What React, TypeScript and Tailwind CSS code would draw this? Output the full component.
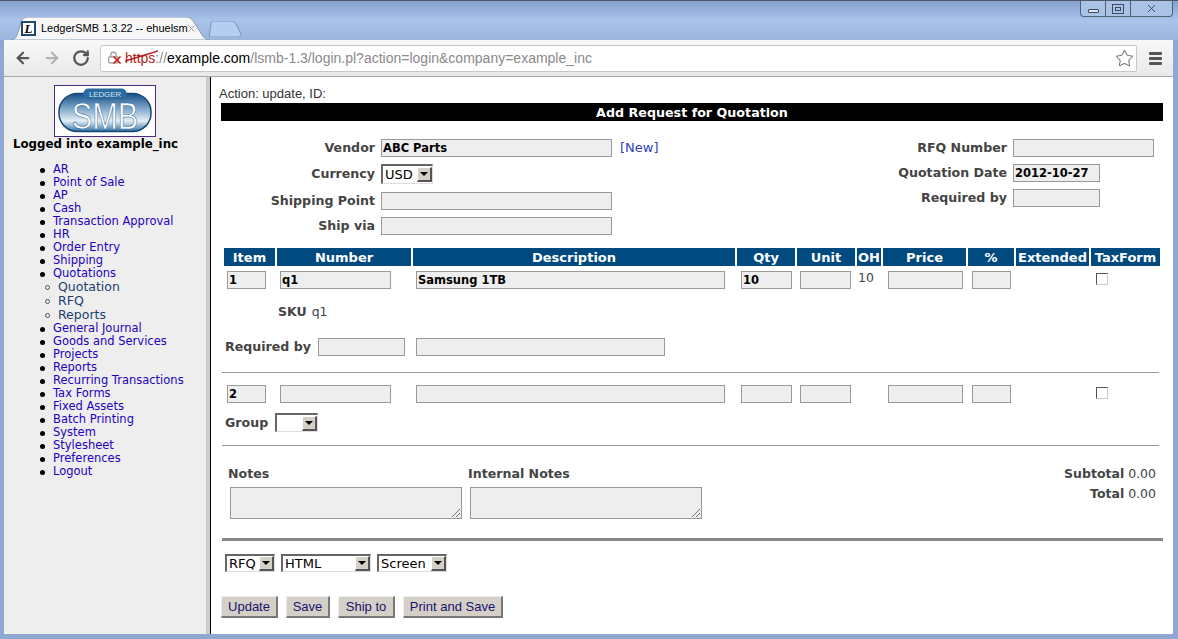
import React from 'react';
import { ArrowLeft, ArrowRight, RotateCw, Lock, Star, X } from 'lucide-react';

const menuTop = ['AR', 'Point of Sale', 'AP', 'Cash', 'Transaction Approval', 'HR', 'Order Entry', 'Shipping', 'Quotations'];
const menuSub = ['Quotation', 'RFQ', 'Reports'];
const menuBottom = [
  'General Journal',
  'Goods and Services',
  'Projects',
  'Reports',
  'Recurring Transactions',
  'Tax Forms',
  'Fixed Assets',
  'Batch Printing',
  'System',
  'Stylesheet',
  'Preferences',
  'Logout',
];

const headers = ['Item', 'Number', 'Description', 'Qty', 'Unit', 'OH', 'Price', '%', 'Extended', 'TaxForm'];

function Field({ value, className }: { value?: string; className: string }) {
  return (
    <div className={`h-[18px] shrink-0 border border-[#999999] bg-[#eeeeee] pl-[1px] text-[11.5px] leading-[17px] font-bold text-black ${className}`}>
      {value}
    </div>
  );
}

function TextArea() {
  return (
    <div className="relative mt-[5px] ml-[2px] h-[32px] w-[232px] border border-[#999999] bg-[#eeeeee]">
      <svg viewBox="0 0 10 10" className="absolute right-0 bottom-0 h-[10px] w-[10px]">
        <path d="M9 1 L1 9 M9 5 L5 9" stroke="#777777" strokeWidth="1" />
      </svg>
    </div>
  );
}

function Select({ value, className }: { value?: string; className: string }) {
  return (
    <div className={`flex shrink-0 items-center justify-between border-t-2 border-l-2 border-r border-b border-t-[#666666] border-l-[#666666] border-r-[#dddddd] border-b-[#dddddd] bg-white text-[13px] leading-none text-black ${className}`}>
      <span className="pl-[2px]">{value}</span>
      <span className="flex h-[15px] w-[15px] items-center justify-center border-t border-l border-r-2 border-b-2 border-t-white border-l-white border-r-[#555555] border-b-[#555555] bg-[#d4d0c8]">
        <span className="h-0 w-0 border-x-[4px] border-t-[4px] border-x-transparent border-t-black" />
      </span>
    </div>
  );
}

function Btn({ label, className }: { label: string; className: string }) {
  return (
    <div className={`flex h-[22px] items-center justify-center border-t border-l border-r-2 border-b-2 border-t-[#eeeeee] border-l-[#eeeeee] border-r-[#777777] border-b-[#777777] bg-[#d4d0c8] font-['Liberation_Sans'] text-[13px] text-[#20106e] ${className}`}>
      {label}
    </div>
  );
}

function Logo() {
  return (
    <div className="mx-auto h-[52px] w-[102px] border border-[#4b2a80] bg-white p-[2px]">
      <svg viewBox="0 0 98 46" className="h-full w-full">
        <defs>
          <linearGradient id="pill" x1="0" y1="0" x2="0" y2="1">
            <stop offset="0" stopColor="#144f88" />
            <stop offset="0.45" stopColor="#8fb2d0" />
            <stop offset="0.72" stopColor="#e6eef4" />
            <stop offset="1" stopColor="#2f70a6" />
          </linearGradient>
        </defs>
        <rect x="2" y="5" width="94" height="39" rx="19" fill="url(#pill)" stroke="#14456f" strokeWidth="1.5" />
        <rect x="27" y="0" width="44" height="11" rx="5" fill="#2a6a9f" />
        <text x="49" y="9" textAnchor="middle" fontFamily="Liberation Sans" fontSize="8" fill="#d6e4ef">LEDGER</text>
        <text x="49" y="41" textAnchor="middle" fontFamily="Liberation Sans" fontSize="38" fill="#ffffff" stroke="#2f6a9c" strokeWidth="0.6" textLength="68" lengthAdjust="spacingAndGlyphs">SMB</text>
      </svg>
    </div>
  );
}

function Sidebar() {
  return (
    <aside className="w-[202px] shrink-0 bg-[#eeeeee] pt-[8px] font-['DejaVu_Sans']">
      <Logo />
      <div className="-mt-[1px] pl-[9px] text-[11.8px] leading-[16px] font-bold text-black">Logged into example_inc</div>
      <ul className="mt-[11px] pl-[49px]">
        {menuTop.map((m) => (
          <li key={m} className="relative h-[13px] text-[11.5px] leading-[13px] text-[#2200c1]">
            <span className="absolute top-[5px] -left-[13px] h-[5px] w-[5px] rounded-full bg-black" />
            {m}
          </li>
        ))}
        {menuSub.map((m) => (
          <li key={m} className="relative h-[14px] pl-[5px] text-[12.5px] leading-[14px] text-[#1c3f6e]">
            <span className="absolute top-[5px] -left-[8px] h-[5px] w-[5px] rounded-full border border-[#555555]" />
            {m}
          </li>
        ))}
        {menuBottom.map((m) => (
          <li key={m} className="relative h-[13px] text-[11.5px] leading-[13px] text-[#2200c1]">
            <span className="absolute top-[5px] -left-[13px] h-[5px] w-[5px] rounded-full bg-black" />
            {m}
          </li>
        ))}
      </ul>
    </aside>
  );
}

function Label({ children, className }: { children: React.ReactNode; className: string }) {
  return <div className={`text-[12.6px] font-bold text-[#444444] ${className}`}>{children}</div>;
}

function TopForm() {
  return (
    <div className="mt-[18px] flex justify-between pr-[19px]">
      <div className="flex flex-col">
        <div className="flex h-[18px] items-center">
          <Label className="w-[154px] text-right">Vendor</Label>
          <Field value="ABC Parts" className="ml-[6px] w-[231px]" />
          <span className="ml-[8px] text-[13px] text-[#2a3fc0]">[New]</span>
        </div>
        <div className="mt-[7px] flex h-[20px] items-center">
          <Label className="w-[154px] pt-[1px] text-right">Currency</Label>
          <Select value="USD" className="ml-[6px] h-[20px] w-[52px]" />
        </div>
        <div className="mt-[8px] flex h-[18px] items-center">
          <Label className="w-[154px] text-right">Shipping Point</Label>
          <Field className="ml-[6px] w-[231px]" />
        </div>
        <div className="mt-[7px] flex h-[18px] items-center">
          <Label className="w-[154px] text-right">Ship via</Label>
          <Field className="ml-[6px] w-[231px]" />
        </div>
      </div>
      <div className="flex flex-col">
        <div className="flex h-[18px] items-center">
          <Label className="w-[140px] text-right">RFQ Number</Label>
          <Field className="ml-[6px] w-[141px]" />
        </div>
        <div className="mt-[7px] flex h-[18px] items-center">
          <Label className="w-[140px] text-right">Quotation Date</Label>
          <Field value="2012-10-27" className="ml-[6px] w-[87px]" />
          <div className="w-[54px]" />
        </div>
        <div className="mt-[7px] flex h-[18px] items-center">
          <Label className="w-[140px] text-right">Required by</Label>
          <Field className="ml-[6px] w-[87px]" />
          <div className="w-[54px]" />
        </div>
      </div>
    </div>
  );
}

function ItemRow({ item, number, description, qty, oh }: { item: string; number?: string; description?: string; qty?: string; oh?: string }) {
  return (
    <div className="flex h-[18px] items-start">
      <Field value={item} className="ml-[3px] w-[39px]" />
      <Field value={number} className="ml-[14px] w-[111px]" />
      <Field value={description} className="ml-[25px] w-[309px]" />
      <Field value={qty} className="ml-[16px] w-[51px]" />
      <Field value="" className="ml-[8px] w-[51px]" />
      <span className="ml-[7px] w-[30px] text-[12.5px] leading-[14px] text-[#444444]">{oh}</span>
      <Field className="w-[75px]" />
      <Field className="ml-[9px] w-[39px]" />
      <span className="mt-[2px] ml-[85px] h-[12px] w-[12px] border border-t-[#555555] border-l-[#555555] border-r-[#cccccc] border-b-[#cccccc] bg-white" />
    </div>
  );
}

function Main() {
  return (
    <main className="min-w-0 flex-1 bg-white pl-[10px] font-['DejaVu_Sans']">
      <div className="-ml-[2px] h-[26px] pt-[9px] font-['Liberation_Sans'] text-[13px] leading-[16px] text-[#333333]">Action: update, ID:</div>
      <div className="h-[18px] w-[942px] bg-black pt-[1px] text-center text-[12.7px] leading-[18px] font-bold text-white">Add Request for Quotation</div>

      <TopForm />

      <div className="mt-[13px] ml-[3px] grid w-[936px] grid-cols-[51px_134px_322px_58px_58px_24px_83px_46px_73px_69px] gap-x-[2px]">
        {headers.map((h) => (
          <div key={h} className="h-[18px] bg-[#004a80] pt-[1px] text-center text-[13px] leading-[18px] font-bold whitespace-nowrap text-white">
            {h}
          </div>
        ))}
      </div>

      <div className="mt-[5px] ml-[3px]">
        <ItemRow item="1" number="q1" description="Samsung 1TB" qty="10" oh="10" />
        <div className="mt-[15px] flex h-[16px] items-center pl-[54px] text-[12.5px]">
          <span className="font-bold text-[#444444]">SKU</span>
          <span className="ml-[5px] text-[#444444]">q1</span>
        </div>
        <div className="mt-[18px] flex h-[18px] items-center pl-[1px]">
          <Label className="w-[93px]">Required by</Label>
          <Field className="w-[87px]" />
          <Field className="ml-[11px] w-[249px]" />
        </div>
      </div>

      <div className="mt-[16px] ml-[1px] h-px w-[937px] bg-[#999999]" />

      <div className="mt-[12px] ml-[3px]">
        <ItemRow item="2" />
        <div className="mt-[10px] flex h-[19px] items-center pl-[1px]">
          <Label className="w-[50px] pt-[1px]">Group</Label>
          <Select className="h-[19px] w-[43px]" />
        </div>
      </div>

      <div className="mt-[13px] ml-[1px] h-px w-[937px] bg-[#999999]" />

      <div className="mt-[20px] flex h-[66px] w-[935px] items-start justify-between">
        <div className="flex">
          <div className="ml-[7px] flex w-[240px] flex-col">
            <Label className="h-[16px] leading-[16px]">Notes</Label>
            <TextArea />
          </div>
          <div className="flex w-[240px] flex-col">
            <Label className="h-[16px] leading-[16px]">Internal Notes</Label>
            <TextArea />
          </div>
        </div>
        <div className="flex flex-col items-end text-[12.5px] leading-[16px] text-[#444444]">
          <div>
            <span className="font-bold">Subtotal</span> 0.00
          </div>
          <div className="mt-[4px]">
            <span className="font-bold">Total</span> 0.00
          </div>
        </div>
      </div>

      <div className="mt-[6px] ml-[1px] h-[3px] w-[941px] bg-[#888888]" />

      <div className="mt-[13px] ml-[4px] flex gap-[6px]">
        <Select value="RFQ" className="h-[18px] w-[50px]" />
        <Select value="HTML" className="h-[18px] w-[90px]" />
        <Select value="Screen" className="h-[18px] w-[70px]" />
      </div>

      <div className="mt-[24px] flex gap-[8px]">
        <Btn label="Update" className="w-[57px]" />
        <Btn label="Save" className="w-[44px]" />
        <Btn label="Ship to" className="w-[57px]" />
        <Btn label="Print and Save" className="w-[100px]" />
      </div>
    </main>
  );
}

function TitleBar() {
  return (
    <div className="-mx-[4px] -mr-[5px] flex h-[39px] items-start bg-gradient-to-b from-[#86a2cf] via-[#a9c3e9] to-[#9ab4dd] pl-[4px]">
      <div className="relative mt-[16px] ml-[6px] flex h-[23px] w-[200px] items-center pl-[11px] font-['Liberation_Sans'] text-[11px] text-black">
        <svg viewBox="0 0 200 23" className="absolute inset-0 h-full w-full">
          <path d="M0 23 C6 23 7 19 9 12 L11 5 C12 2 14 0 18 0 L176 0 C180 0 182 2 184 5 L192 18 C194 21 196 23 200 23 Z" fill="#f7f7f7" stroke="#8a9cb6" strokeWidth="1" />
        </svg>
        <span className="relative flex h-[15px] w-[15px] shrink-0 items-center justify-center border-2 border-[#1d4a6e] bg-white font-['Liberation_Serif'] text-[13px] leading-none font-bold text-black italic">L</span>
        <span className="relative ml-[5px] w-[145px] whitespace-nowrap">LedgerSMB 1.3.22 -- ehuelsm</span>
        <X className="relative h-[11px] w-[11px] shrink-0 text-[#999999]" strokeWidth={2} />
      </div>
      <svg viewBox="0 0 34 16" className="mt-[20px] ml-[-2px] h-[16px] w-[34px] shrink-0">
        <path d="M1 16 L3 3 C3 1 4 0 6 0 L24 0 C26 0 27 1 28 3 L33 13 C33 15 32 16 30 16 Z" fill="#b4cdf0" stroke="#7a94b8" strokeWidth="1" />
      </svg>
      <div className="flex-1" />
      <div className="mr-[5px] flex h-[16px] w-[93px] overflow-hidden rounded-b-[4px] border border-t-0 border-[#4f6078] bg-[#a9c2e6]">
        <div className="flex w-[25px] items-end justify-center border-r border-[#4f6078] pb-[3px]">
          <span className="h-[4px] w-[11px] rounded-[1px] border border-[#3c4a5c] bg-[#dce7f6]" />
        </div>
        <div className="flex w-[25px] items-center justify-center border-r border-[#4f6078]">
          <span className="flex h-[10px] w-[12px] items-center justify-center border border-[#3c4a5c]">
            <span className="h-[4px] w-[6px] border border-[#3c4a5c]" />
          </span>
        </div>
        <div className="flex flex-1 items-center justify-center">
          <X className="h-[13px] w-[13px] text-[#3c4a5c]" strokeWidth={1.8} />
        </div>
      </div>
    </div>
  );
}

function Toolbar() {
  return (
    <div className="flex h-[37px] items-center border-b border-[#a8a8a8] bg-gradient-to-b from-[#f8f8f8] to-[#e9e9e9] pr-[8px] pl-[10px]">
      <ArrowLeft className="h-[18px] w-[18px] text-[#555555]" strokeWidth={3} />
      <ArrowRight className="ml-[11px] h-[18px] w-[18px] text-[#b4b4b4]" strokeWidth={3} />
      <RotateCw className="ml-[11px] h-[18px] w-[18px] text-[#555555]" strokeWidth={3} />
      <div className="ml-[10px] flex h-[27px] w-[1037px] items-center rounded-[2px] border border-[#c8c8c8] bg-white pr-[2px] pl-[6px] font-['Liberation_Sans'] text-[14px] whitespace-nowrap">
        <span className="relative h-[16px] w-[18px] shrink-0">
          <Lock className="absolute top-0 left-0 h-[15px] w-[13px] text-[#999999]" strokeWidth={2.2} />
          <X className="absolute top-[4px] left-[4px] h-[12px] w-[12px] text-[#cc2211]" strokeWidth={3.5} />
        </span>
        <span className="relative text-[#b02020]">
          https
          <svg viewBox="0 0 33 12" className="absolute top-[2px] left-0 h-[12px] w-[33px]">
            <path d="M0 11 L33 1" stroke="#b02020" strokeWidth="1.5" />
          </svg>
        </span>
        <span className="text-[#8a8a8a]">://</span>
        <span className="text-black">example.com</span>
        <span className="text-[#8a8a8a]">/lsmb-1.3/login.pl?action=login&amp;company=example_inc</span>
        <div className="flex-1" />
        <Star className="h-[19px] w-[19px] text-[#777777]" strokeWidth={1.3} />
      </div>
      <div className="ml-[12px] flex w-[13px] flex-col gap-[2px]">
        <span className="h-[3px] rounded-[1px] bg-[#555555]" />
        <span className="h-[3px] rounded-[1px] bg-[#555555]" />
        <span className="h-[3px] rounded-[1px] bg-[#555555]" />
      </div>
    </div>
  );
}

export default function App() {
  return (
    <div className="flex h-[639px] w-[1178px] flex-col overflow-hidden border-t border-[#4b5668] bg-[#8ea8d2] pr-[5px] pb-[5px] pl-[4px]">
      <TitleBar />
      <Toolbar />
      <div className="flex min-h-0 flex-1">
        <Sidebar />
        <div className="w-[4px] shrink-0 bg-[#cccccc]" />
        <div className="w-px shrink-0 bg-black" />
        <Main />
      </div>
    </div>
  );
}
